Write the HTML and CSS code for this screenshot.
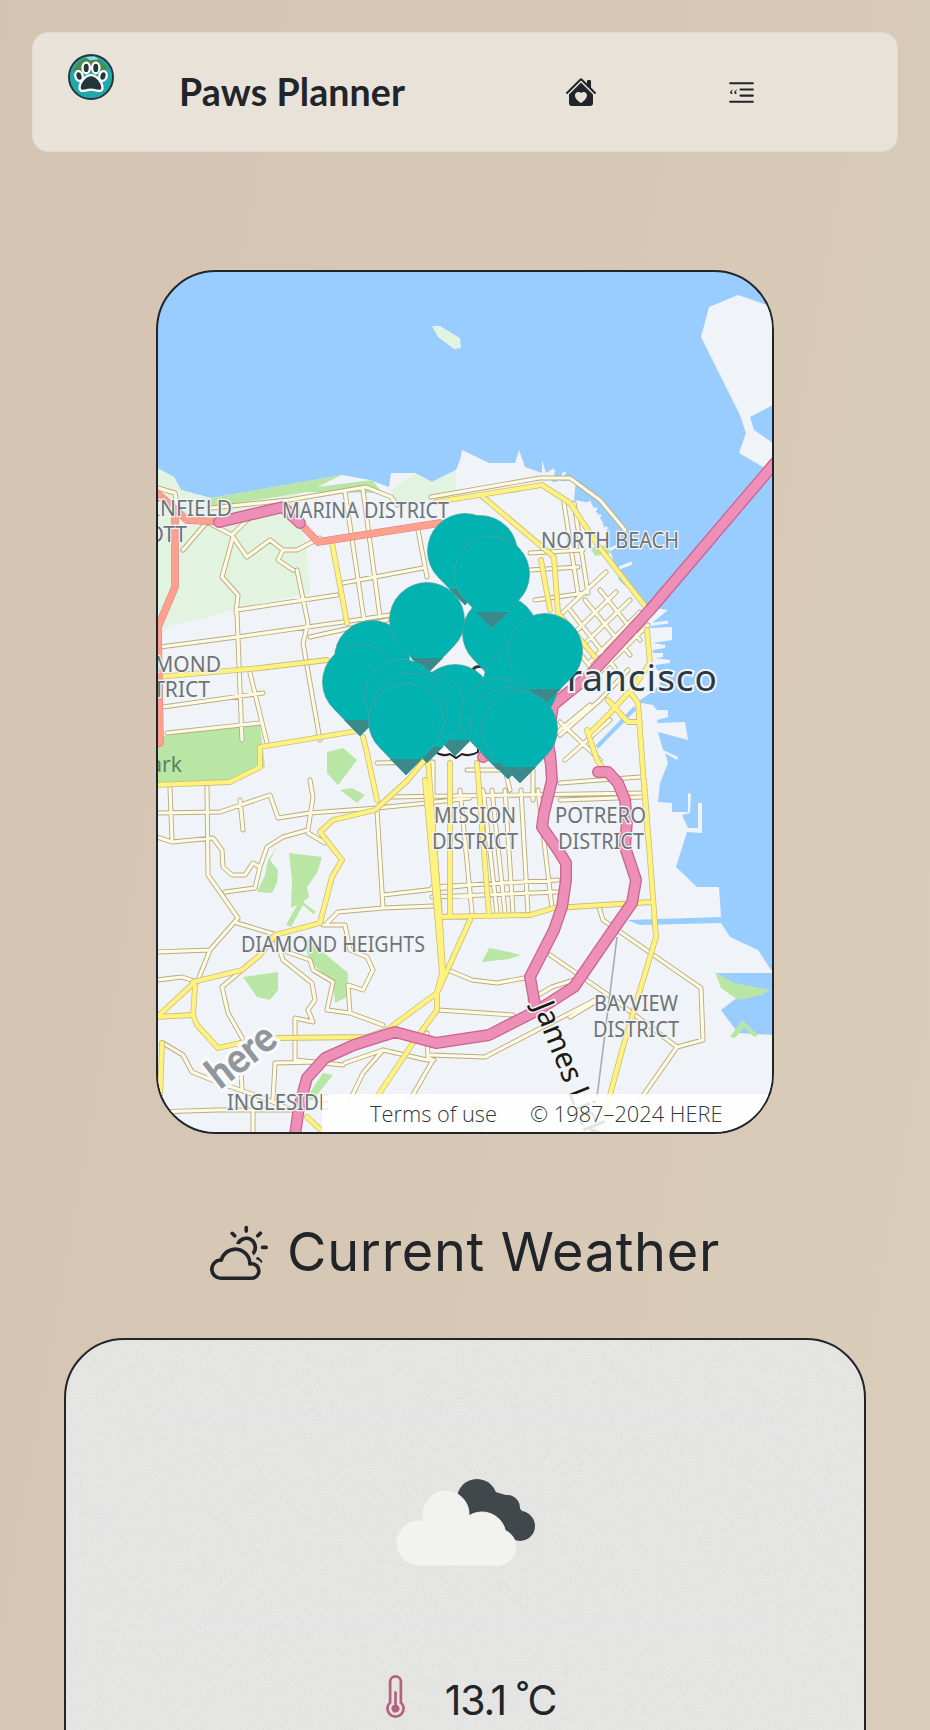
FILE: index.html
```html
<!DOCTYPE html>
<html lang="en">
<head>
    <meta charset="UTF-8">
    <meta name="viewport" content="width=device-width, initial-scale=1.0">
    <title>Paws Planner</title>
    <link rel="stylesheet" href="styles.css">
</head>
<body>
    <nav class="navbar">
        <svg class="logo" viewBox="0 0 48 48">
            <circle cx="24" cy="24" r="23" fill="#1fa9a8" stroke="#25353b" stroke-width="2"/>
            <path d="M5 18c3-9 11-15 20-15 7 1 13 6 17 13-6 4-10 0-15 1-8-1-14 4-22 1z" fill="#4a8c50"/>
            <path d="M18 3.500l10-1 4 3-9 1z" fill="#9fd8f0"/>
            <g fill="#25353b" stroke="#fff" stroke-width="2.4">
                <ellipse cx="11.500" cy="23" rx="3.800" ry="5.200" transform="rotate(-15 11.500 23)"/>
                <ellipse cx="19" cy="14.500" rx="3.800" ry="5.600"/>
                <ellipse cx="29" cy="14.500" rx="3.800" ry="5.600"/>
                <ellipse cx="36.500" cy="23" rx="3.800" ry="5.200" transform="rotate(15 36.500 23)"/>
                <path d="M24 22c6 0 12 8 12 13 0 4-3 4-7 3-3-1-7-1-10 0-4 1-7 1-7-3 0-5 6-13 12-13z"/>
            </g>
        </svg>
        <div class="brand">Paws Planner</div>
        <a class="nav-home">
            <svg viewBox="0 0 16 16" fill="currentColor">
                <path d="M7.293 1.5a1 1 0 0 1 1.414 0L11 3.793V2.5a.5.5 0 0 1 .5-.5h1a.5.5 0 0 1 .5.5v3.293l2.354 2.353a.5.5 0 0 1-.708.708L8 2.207 1.354 8.854a.5.5 0 1 1-.708-.708z"/>
                <path d="m14 9.293-6-6-6 6V13.5A1.5 1.5 0 0 0 3.5 15h9a1.5 1.5 0 0 0 1.5-1.5zm-6-.811c1.664-1.673 5.825 1.254 0 5.018-5.825-3.764-1.664-6.691 0-5.018"/>
            </svg>
        </a>
        <a class="nav-menu">
            <svg viewBox="0 0 16 16" fill="currentColor">
                <path d="M2.5 3a.5.5 0 0 0 0 1h11a.5.5 0 0 0 0-1zm5 3a.5.5 0 0 0 0 1h6a.5.5 0 0 0 0-1zm0 3a.5.5 0 0 0 0 1h6a.5.5 0 0 0 0-1zm-5 3a.5.5 0 0 0 0 1h11a.5.5 0 0 0 0-1z"/>
                <path d="M3.600 6.500c-.7.4-1.100.9-1.100 1.500 0 .4.2.7.6.7.3 0 .5-.2.5-.5s-.2-.5-.5-.5c.1-.3.3-.6.7-.9zm2 0c-.7.4-1.100.9-1.100 1.500 0 .4.2.7.6.7.3 0 .5-.2.5-.5s-.2-.5-.5-.5c.1-.3.3-.6.7-.9z"/>
            </svg>
        </a>
    </nav>

    <div class="map">
        <svg class="map-svg" viewBox="158 272 614 860">
            <defs>
                <path id="minor" d="M157 813L220 812 270 795 278 818 310 813 377 808 427 803 470 798M170 788L172 840M207 787L208 875 238 918 210 950 198 980M157 837L172 842 213 838 222 850 223 867 232 875 245 875 253 863 260 867 255 888 225 892M310 780L313 797 308 830 283 837 267 847 260 867M308 833L325 843M157 952L210 950M237 923L277 935M275 937L283 960 312 983 315 1000 308 1010 313 1022 295 1018 295 1060M287 952L310 960 313 970 333 982 327 1010 350 1013 383 1025M350 1013L348 985 363 990 373 970 367 957 350 950 345 925 323 925M327 923L338 912 383 908 433 906M377 810L383 908M383 895L470 885M242 970L222 987 228 1013 245 1043M157 980L182 977 197 982M163 1043L183 1055 192 1072 217 1082 263 1098 297 1112M157 1112L217 1110 293 1110M253 1110V1133M275 1063L317 1062M275 1063L273 1100M295 1060L343 1065M240 1047L242 1090M345 1063L383 1050 427 1060 434 1060M383 1050L363 1073 350 1100M437 1010L470 1012M427 1033L428 1058 433 1060 410 1100M448 970L472 980 497 983 530 977M460 790L472 913M483 790L497 913M492 790L505 913M505 790L513 913M521 790L528 913M538 790L552 908M390 797L644 793M432 887L558 880M432 897L558 892M562 800L619 798M599 907L603 920 701 988 703 1040 677 1047 640 1100M550 955L611 997 677 1047M530 1000L552 987 574 980M438 1010L513 1015M570 1017L595 1002M430 1055L485 1057 595 1000M211 508L289 500 366 487 391 497 397 505M431 497L540 478 570 478 600 500 625 530M363 490L380 617M418 530L427 577M297 570L308 623 303 643 320 740M237 613L242 740M250 673L267 743M237 610L337 595M343 583L423 568M160 647L237 637 343 622 390 615M310 637L387 620M163 707L263 693M167 733L260 723M345 492L364 620M233 537L247 557 270 540 283 550 278 560 293 570M233 537L222 577 238 595 236 613M183 550L207 522 232 535 247 520M283 550L297 550 320 538M158 488L175 493 178 510M564 503L578 593M574 503L588 593M530 553L583 550M530 570L578 567M535 600L585 593M560 615L606 572M567 640L616 592M578 650L630 600M590 662L640 612M600 672L648 625M585 600L630 655M570 610L615 668M555 620L600 680M600 590L640 640M560 735L600 700 628 670M560 783L640 777M560 800L642 797M600 760L560 722M377 763L433 762M467 770L533 770M433 762V800M533 770V800M240 800L243 830M433 830L440 910M505 770L510 790M548 740L590 705M565 760L610 720"/>
                <path id="major" d="M157 1017L193 1015 195 987 193 982 242 970 260 955 275 935 320 923 332 877 342 860 320 832 333 820 375 810 408 780 427 757M157 1017L195 982M193 1015L197 1025 218 1048 240 1043 278 1038 367 1037 395 1027M162 1043L160 1097M425 780L437 913 442 973 437 993 403 1018 390 1028M428 760L440 920 443 970M437 917L530 915 554 908 652 902M470 920L437 993 437 1010 413 1043 377 1097M307 1117L323 1132M644 780L656 937 623 1047 600 1132M450 763L450 917M477 763L489 915M436 502L542 485 570 503 599 547 648 610M483 497L554 557 558 613 595 657M332 543L347 623M157 677L260 668 327 660M260 747L363 730M260 747L260 767 230 782 157 785M363 737L367 753 377 800M647 630L650 663 630 692 638 703 648 840M608 700L628 722 640 722M587 730L597 760 602 767M590 733L610 713 628 693M541 560L550 610"/>
                <path id="motorway" d="M598 772L608 772 618 783 625 800 627 820 625 847 636 880 632 903 611 933 574 987 538 1010 489 1035 436 1043 395 1032 354 1045 325 1058 307 1078 299 1107 295 1135M552 780L544 813 542 827 558 850 566 863 566 880 562 907 554 930 530 977 536 1010M550 753L552 780M775 463L650 610 590 675 553 705 483 757M553 705L548 740 550 760M219 522L283 507 300 523"/>
                <path id="trunk" d="M300 523L318 542 440 523M175 513V587L158 627 160 743M157 493L187 520 222 522"/>
                <g id="pin">
                    <path d="M0 0L-26 -27A37.5 37.5 0 1 1 26 -27Z" fill="#00b2b0" stroke="#5a9c9c" stroke-width=".7"/>
                    <path d="M0 0L-16 -16H16Z" fill="#3a8a8b"/>
                </g>
            </defs>

            <polygon class="land" points="157,468 174,477 181,490 211,498 297,483 342,475 370,480 389,487 391,473 415,473 432,482 456,470 460,460 462,450 489,463 515,463 519,450 525,467 542,473 542,460 546,473 554,468 552,482 576,480 574,500 591,503 603,523 611,553 619,580 648,607 668,610 652,623 650,628 672,627 672,640 653,643 665,645 665,648 653,650 653,653 663,653 663,657 655,658 670,660 670,663 655,665 657,670 668,673 660,683 655,690 637,702 653,705 657,710 668,710 668,717 657,720 658,723 685,722 688,740 658,732 663,750 678,757 677,760 665,753 668,763 660,783 658,802 672,803 672,812 688,812 688,793 691,794 690,813 682,815 688,828 698,828 698,803 702,803 702,833 687,832 676,867 697,887 719,887 721,917 627,920 640,925 721,923 730,937 758,950 773,973 717,973 738,997 721,1010 738,1033 773,1035 773,1135 157,1135"/>
            <polygon class="land" points="701,337 709,307 738,295 773,307 773,405 750,417 754,430 773,443 773,473 739,453 746,433 740,415"/>
            <path class="pier" d="M579 508L591 502M583 517L597 508M589 523L601 515M599 537L607 527M609 550L619 545M619 568L632 563M554 470L550 483M565 472L558 483M648 625L668 622"/>
            <polygon class="park-light" points="432,326 440,326 460,338 461,348 454,349 438,337"/>
            <polygon class="park-light" points="157,468 174,477 181,490 211,498 297,490 307,550 310,593 237,608 200,620 170,625 157,640"/>
            <polygon class="park-light" points="391,490 415,473 432,482 456,470 456,497 391,505"/>
            <polygon class="park" points="211,498 297,483 342,475 317,487 372,480 383,493 307,492 211,507"/>
            <polygon class="park" points="157,737 260,723 265,767 230,782 157,785"/>
            <polygon class="park" points="327,752 343,748 357,760 338,785 327,773"/>
            <polygon class="park" points="340,790 352,788 365,795 357,803"/>
            <polygon class="park" points="289,853 322,857 317,873 307,887 309,897 303,902 316,912 313,914 303,905 291,927 286,925 297,905 291,908 292,880"/>
            <polygon class="park" points="277,847 270,860 278,870 277,883 272,893 257,892 265,875 268,860"/>
            <polygon class="park" points="300,933 348,973 347,997 335,1003 333,982 310,962 307,953"/>
            <polygon class="park" points="243,977 257,975 278,972 278,990 270,1000 257,997"/>
            <polygon class="park" points="323,1073 333,1075 313,1100 305,1100"/>
            <polygon class="park" points="482,962 489,948 509,952 521,955 509,959"/>
            <polygon class="park" points="715,972 734,983 770,990 762,995 738,1000 721,988"/>
            <polygon class="park" points="730,1037 742,1020 758,1035 754,1037 744,1027 735,1038"/>
            <polygon class="park" points="590,548 606,545 612,553 595,556"/>
            <polygon class="park" points="470,1105 482,1102 484,1132 465,1132"/>
            <polyline class="channel" points="597,747 635,708"/>

            <use href="#minor" class="road minor-case"/>
            <use href="#minor" class="road minor-fill"/>
            <use href="#major" class="road major-case"/>
            <use href="#major" class="road major-fill"/>
            <path class="rail" d="M617 937L597 1097"/>
            <use href="#trunk" class="road trunk-case"/>
            <use href="#trunk" class="road trunk-fill"/>
            <use href="#motorway" class="road motorway-case"/>
            <use href="#motorway" class="road motorway-fill"/>

            <text class="lbl" x="232" y="516" text-anchor="end">WINFIELD</text>
            <text class="lbl" x="187" y="542" text-anchor="end">SCOTT</text>
            <text class="lbl" x="282" y="518" textLength="167" lengthAdjust="spacingAndGlyphs">MARINA DISTRICT</text>
            <text class="lbl" x="541" y="548" textLength="138" lengthAdjust="spacingAndGlyphs">NORTH BEACH</text>
            <text class="lbl" x="221" y="672" text-anchor="end">RICHMOND</text>
            <text class="lbl" x="210" y="697" text-anchor="end">DISTRICT</text>
            <text class="lbl lbl-park" x="182" y="772" text-anchor="end">Park</text>
            <text class="lbl" x="434" y="823" textLength="82" lengthAdjust="spacingAndGlyphs">MISSION</text>
            <text class="lbl" x="432" y="849" textLength="86" lengthAdjust="spacingAndGlyphs">DISTRICT</text>
            <text class="lbl" x="555" y="823" textLength="91" lengthAdjust="spacingAndGlyphs">POTRERO</text>
            <text class="lbl" x="558" y="849" textLength="86" lengthAdjust="spacingAndGlyphs">DISTRICT</text>
            <text class="lbl" x="241" y="952" textLength="184" lengthAdjust="spacingAndGlyphs">DIAMOND HEIGHTS</text>
            <text class="lbl" x="594" y="1011" textLength="84" lengthAdjust="spacingAndGlyphs">BAYVIEW</text>
            <text class="lbl" x="593" y="1037" textLength="86" lengthAdjust="spacingAndGlyphs">DISTRICT</text>
            <text class="lbl" x="227" y="1110" textLength="103" lengthAdjust="spacingAndGlyphs">INGLESIDE</text>
            <text class="city" x="469" y="691" textLength="248">San Francisco</text>
            <text class="street" transform="translate(533 1006) rotate(68)">James Lick</text>
            <text class="here-logo" transform="translate(220 1090) rotate(-38)" textLength="76" lengthAdjust="spacingAndGlyphs">here</text>
            <path class="shield" d="M436 739Q456 732 478 739V752Q470 757 462 754L456 758 450 754Q442 757 436 752Z"/>

            <use href="#pin" x="480" y="607"/>
            <use href="#pin" x="465" y="605"/>
            <use href="#pin" x="500" y="687"/>
            <use href="#pin" x="520" y="740"/>
            <use href="#pin" x="492" y="628"/>
            <use href="#pin" x="545" y="705"/>
            <use href="#pin" x="372" y="712"/>
            <use href="#pin" x="427" y="674"/>
            <use href="#pin" x="360" y="736"/>
            <use href="#pin" x="455" y="756"/>
            <use href="#pin" x="427" y="763"/>
            <use href="#pin" x="402" y="751"/>
            <use href="#pin" x="410" y="765"/>
            <use href="#pin" x="406" y="775"/>
            <use href="#pin" x="498" y="770"/>
            <use href="#pin" x="508" y="779"/>
            <use href="#pin" x="520" y="783"/>
        </svg>
        <div class="map-attrib">
            <span>Terms of use</span>
            <span>© 1987–2024 HERE</span>
        </div>
    </div>

    <h2 class="section-title">
        <svg viewBox="0 0 16 16" fill="currentColor">
            <path d="M7 8a3.5 3.5 0 0 1 3.5 3.555.5.5 0 0 0 .624.492A1.503 1.503 0 0 1 13 13.5a1.5 1.5 0 0 1-1.5 1.5H3a2 2 0 1 1 .1-3.998.5.5 0 0 0 .51-.375A3.5 3.5 0 0 1 7 8m4.473 3a4.5 4.5 0 0 0-8.72-.99A3 3 0 0 0 3 16h8.5a2.5 2.5 0 0 0 0-5z"/>
            <path d="M10.5 1.5a.5.5 0 0 0-1 0v1a.5.5 0 0 0 1 0zm3.743 1.964a.5.5 0 1 0-.707-.707l-.708.707a.5.5 0 0 0 .708.708zm-7.779-.707a.5.5 0 0 0-.707.707l.707.708a.5.5 0 1 0 .708-.708zm1.734 3.374a2 2 0 1 1 3.296 2.198q.3.423.516.898a3 3 0 1 0-4.84-3.225q.529.017 1.028.129m4.484 4.074c.6.215 1.125.59 1.522 1.072a.5.5 0 0 0 .039-.742l-.707-.707a.5.5 0 0 0-.854.377M14.5 6.5a.5.5 0 0 0 0 1h1a.5.5 0 0 0 0-1z"/>
        </svg>
        Current Weather
    </h2>

    <section class="weather-card">
        <svg class="grain">
            <filter id="grainFilter">
                <feTurbulence type="fractalNoise" baseFrequency="0.7" numOctaves="3"/>
                <feColorMatrix values="0 0 0 0 0.55  0 0 0 0 0.55  0 0 0 0 0.52  0 0 0 -6 2.4"/>
            </filter>
            <rect width="100%" height="100%" filter="url(#grainFilter)"/>
        </svg>
        <div class="weather-icon">
            <svg viewBox="396 1478 142 90">
                <g fill="#40484c">
                    <circle cx="478" cy="1500" r="20"/>
                    <circle cx="508" cy="1509" r="13"/>
                    <circle cx="521" cy="1527" r="15"/>
                    <path d="M470 1485L510 1497 530 1520 515 1540 470 1530z"/>
                </g>
                <g fill="#f2f3ee" stroke="#f2f3ee">
                    <circle cx="447" cy="1515" r="23"/>
                    <circle cx="483" cy="1537" r="24"/>
                    <circle cx="499" cy="1548" r="18"/>
                    <circle cx="420" cy="1544" r="22"/>
                    <rect x="420" y="1530" width="80" height="36"/>
                </g>
            </svg>
        </div>
        <div class="temp-row">
            <svg viewBox="0 0 16 16" fill="currentColor">
                <path d="M9.5 12.5a1.5 1.5 0 1 1-2-1.415V6.5a.5.5 0 0 1 1 0v4.585a1.5 1.5 0 0 1 1 1.415"/>
                <path d="M5.5 2.5a2.5 2.5 0 0 1 5 0v7.55a3.5 3.5 0 1 1-5 0zM8 1a1.5 1.5 0 0 0-1.5 1.5v7.987l-.167.15a2.5 2.5 0 1 0 3.333 0l-.166-.15V2.5A1.5 1.5 0 0 0 8 1"/>
            </svg>
            <span class="temp-value">13.1 ˚C</span>
        </div>
    </section>
</body>
</html>
```

FILE: styles.css
```css
html, body {
    height: 1730px;
    overflow: hidden;
}
body {
    margin: 0;
    padding: 32px 32px 0;
    box-sizing: border-box;
    font-family: Inter, "Liberation Sans", sans-serif;
    color: #212529;
    background: linear-gradient(100deg, #d5c3b2, #d9cdb9);
}

/* navbar */
.navbar {
    display: grid;
    grid-template-columns: 112px 386px 160px 1fr;
    align-items: start;
    height: 120px;
    box-sizing: border-box;
    padding: 21px 0 0 34px;
    background: #e8e2d8;
    border: 1px solid #dcdcd8;
    border-radius: 16px;
}
.logo {
    width: 48px;
    height: 46px;
}
.brand {
    margin-top: 16px;
    font-family: Lato, sans-serif;
    font-size: 37.5px;
    font-weight: 700;
    line-height: 44px;
    letter-spacing: 0.1px;
}
.nav-home svg {
    display: block;
    width: 32px;
    height: 32px;
    margin-top: 22px;
}
.nav-menu svg {
    display: block;
    width: 33px;
    height: 33px;
    margin-top: 22px;
}

/* map */
.map {
    position: relative;
    width: 618px;
    height: 864px;
    margin: 118px auto 0;
    box-sizing: border-box;
    border: 2px solid #212529;
    border-radius: 60px;
    overflow: hidden;
    background: #99ccff;
}
.map-svg {
    display: block;
    width: 100%;
    height: 100%;
}
.land { fill: #f0f4f8; }
.pier { fill: none; stroke: #f0f4f8; stroke-width: 3; }
.park { fill: #b9e6a5; }
.park-light { fill: #e2f3e0; }
.channel { fill: none; stroke: #99ccff; stroke-width: 4; }
.rail { fill: none; stroke: #a9adad; stroke-width: 1.6; }
.road { fill: none; stroke-linejoin: round; stroke-linecap: round; }
.minor-case { stroke: #b8aa88; stroke-width: 5; }
.minor-fill { stroke: #fffbe0; stroke-width: 3.2; }
.major-case { stroke: #cdbd7e; stroke-width: 5.8; }
.major-fill { stroke: #fff27e; stroke-width: 4.2; }
.trunk-case { stroke: #d77f8a; stroke-width: 7.5; }
.trunk-fill { stroke: #ffa08c; stroke-width: 6.5; }
.motorway-case { stroke: #c9638e; stroke-width: 12; }
.motorway-fill { stroke: #ee8fb7; stroke-width: 9.5; }
.lbl {
    font-family: "Noto Sans", sans-serif;
    font-size: 21px;
    fill: #6f7376;
    stroke: #f0f4f8;
    stroke-width: 2.5px;
    paint-order: stroke;
}
.lbl-park { fill: #5f8063; stroke: #b9e6a5; }
.city {
    font-family: "Noto Sans", sans-serif;
    font-size: 37px;
    fill: #2b3a42;
    stroke: #f0f4f8;
    stroke-width: 4px;
    paint-order: stroke;
}
.street {
    font-family: "Noto Sans", sans-serif;
    font-size: 30px;
    fill: #1a1a1a;
    stroke: #f4f4f4;
    stroke-width: 3px;
    paint-order: stroke;
}
.here-logo {
    font-family: Lato, sans-serif;
    font-size: 42px;
    font-weight: 900;
    fill: #8f969c;
    stroke: #f8f9fa;
    stroke-width: 7px;
    paint-order: stroke;
}
.shield {
    fill: #fff;
    stroke: #222;
    stroke-width: 2;
}
.map-attrib {
    position: absolute;
    left: 164px;
    right: 0;
    bottom: 0;
    height: 38px;
    box-sizing: border-box;
    display: flex;
    align-items: center;
    gap: 33px;
    padding: 0 0 0 48px;
    background: rgba(255, 255, 255, 0.88);
    font-family: "Open Sans", sans-serif;
    font-size: 21.8px;
    font-weight: 300;
    color: #33383c;
}

/* weather */
.section-title {
    display: flex;
    justify-content: center;
    align-items: center;
    gap: 19px;
    height: 58px;
    margin: 88px 0 58px;
    font-size: 54px;
    font-weight: 400;
    letter-spacing: 0.7px;
}
.section-title svg {
    width: 58px;
    height: 58px;
}
.weather-card {
    position: relative;
    width: 802px;
    height: 600px;
    margin: 0 auto;
    box-sizing: border-box;
    padding: 80px 32px 0;
    background: #e5e5e3;
    border: 2px solid #212529;
    border-radius: 60px;
    overflow: hidden;
}
.grain {
    position: absolute;
    top: 0;
    left: 0;
    width: 100%;
    height: 100%;
    opacity: 0.3;
}
.weather-icon {
    position: relative;
    display: flex;
    justify-content: center;
    align-items: center;
    height: 202px;
    box-sizing: border-box;
    border: 1px solid #e0e4ea;
    border-radius: 85px;
}
.weather-icon svg {
    width: 142px;
    height: 90px;
    margin-left: 2px;
    margin-top: 2px;
}
.temp-row {
    position: relative;
    display: flex;
    justify-content: center;
    align-items: center;
    gap: 28px;
    margin-top: 53px;
}
.temp-row svg {
    width: 43px;
    height: 43px;
    margin-bottom: 8px;
    color: #b5617a;
}
.temp-value {
    font-size: 41px;
    letter-spacing: -1.2px;
    line-height: 43px;
}
```
